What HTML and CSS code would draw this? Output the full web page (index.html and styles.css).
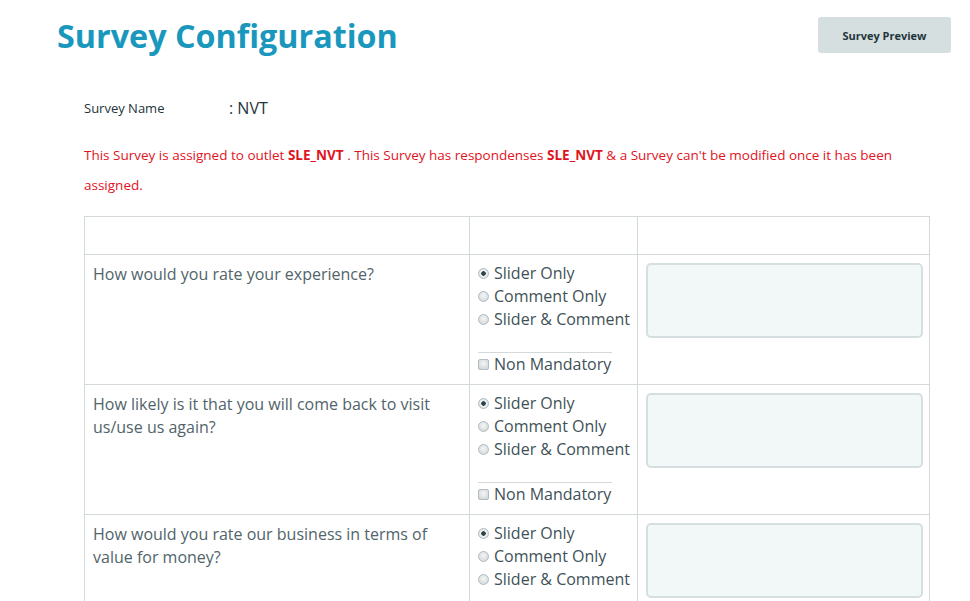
FILE: index.html
```html
<!DOCTYPE html>
<html lang="en">
<head>
    <meta charset="UTF-8">
    <meta name="viewport" content="width=device-width, initial-scale=1.0">
    <title>Survey Configuration</title>
    <link rel="stylesheet" href="styles.css">
</head>
<body>
    <div class="header">
        <h1>Survey Configuration</h1>
        <button class="preview-btn">Survey Preview</button>
    </div>

    <div class="content">
        <div class="survey-name">
            <span class="name-label">Survey Name</span>
            <span class="name-value">: NVT</span>
        </div>

        <p class="warning">This Survey is assigned to outlet <b>SLE_NVT</b> . This Survey has respondenses <b>SLE_NVT</b> &amp; a Survey can't be modified once it has been assigned.</p>

        <table class="questions">
            <tr class="head-row">
                <td class="col-question"></td>
                <td class="col-type"></td>
                <td class="col-comment"></td>
            </tr>
            <tr>
                <td class="question">How would you rate your experience?</td>
                <td class="options">
                    <label><input type="radio" name="q1" checked> Slider Only</label>
                    <label><input type="radio" name="q1"> Comment Only</label>
                    <label><input type="radio" name="q1"> Slider &amp; Comment</label>
                    <div class="mandatory"><label><input type="checkbox"> Non Mandatory</label></div>
                </td>
                <td class="comment"><textarea></textarea></td>
            </tr>
            <tr>
                <td class="question">How likely is it that you will come back to visit us/use us again?</td>
                <td class="options">
                    <label><input type="radio" name="q2" checked> Slider Only</label>
                    <label><input type="radio" name="q2"> Comment Only</label>
                    <label><input type="radio" name="q2"> Slider &amp; Comment</label>
                    <div class="mandatory"><label><input type="checkbox"> Non Mandatory</label></div>
                </td>
                <td class="comment"><textarea></textarea></td>
            </tr>
            <tr>
                <td class="question">How would you rate our business in terms of value for money?</td>
                <td class="options">
                    <label><input type="radio" name="q3" checked> Slider Only</label>
                    <label><input type="radio" name="q3"> Comment Only</label>
                    <label><input type="radio" name="q3"> Slider &amp; Comment</label>
                    <div class="mandatory"><label><input type="checkbox"> Non Mandatory</label></div>
                </td>
                <td class="comment"><textarea></textarea></td>
            </tr>
        </table>
    </div>
</body>
</html>
```

FILE: styles.css
```css
body {
    font-family: 'Open Sans', sans-serif;
    margin: 0;
    background-color: #ffffff;
    color: #4d5f64;
}
.header {
    display: flex;
    justify-content: space-between;
    align-items: flex-start;
    padding: 0 19px 0 57px;
}
h1 {
    color: #1a97bd;
    font-size: 32.3px;
    font-weight: 700;
    margin: 13px 0 0;
    line-height: 44px;
}
.preview-btn {
    margin-top: 17px;
    width: 133px;
    height: 36px;
    background-color: #d5dfe0;
    border: none;
    border-radius: 3px;
    font-family: 'Open Sans', sans-serif;
    font-size: 11px;
    font-weight: 700;
    color: #23343b;
    cursor: pointer;
}
.content {
    padding: 0 40px 0 84px;
}
.survey-name {
    display: flex;
    align-items: baseline;
    margin-top: 38px;
    height: 26px;
}
.name-label {
    width: 145px;
    font-size: 13px;
    color: #23343b;
    position: relative;
    top: 1px;
}
.name-value {
    font-size: 16px;
    color: #23343b;
    position: relative;
    top: 2px;
}
.warning {
    color: #e0141e;
    font-size: 13.5px;
    line-height: 30px;
    margin: 19px 0 16px;
    max-width: 846px;
}
.warning b {
    font-weight: 700;
}
.questions {
    border-collapse: collapse;
    table-layout: fixed;
    width: 846px;
}
.questions td {
    border: 1px solid #d3d8da;
    padding: 8px;
    vertical-align: top;
    font-size: 16px;
    line-height: 23px;
}
.head-row td {
    height: 21px;
}
.col-question {
    width: 368px;
}
.col-type {
    width: 151px;
}
.question {
    color: #51646a;
    padding-left: 7px;
}
.options label {
    display: flex;
    align-items: center;
    gap: 5px;
    white-space: nowrap;
    color: #3f5157;
}
.options > label:first-child {
    margin-top: -1px;
}
.options input {
    appearance: none;
    margin: 0;
    width: 11px;
    height: 11px;
    border: 1px solid #b5bcbf;
    background: radial-gradient(circle at 50% 40%, #f4f6f7, #cdd3d5);
    flex-shrink: 0;
}
.options input[type="radio"] {
    border-radius: 50%;
}
.options input[type="radio"]:checked {
    background: radial-gradient(circle, #2e4248 0 2px, #f4f6f7 2.5px, #cdd3d5);
}
.options input[type="checkbox"] {
    border-radius: 2px;
}
.mandatory {
    margin-top: 21px;
    border-top: 1px solid #d3d8da;
    width: 134px;
}
.comment textarea {
    display: block;
    width: 277px;
    height: 75px;
    box-sizing: border-box;
    border: 2px solid #d5dfe0;
    border-radius: 5px;
    background-color: #f2f7f8;
    resize: none;
}
```
